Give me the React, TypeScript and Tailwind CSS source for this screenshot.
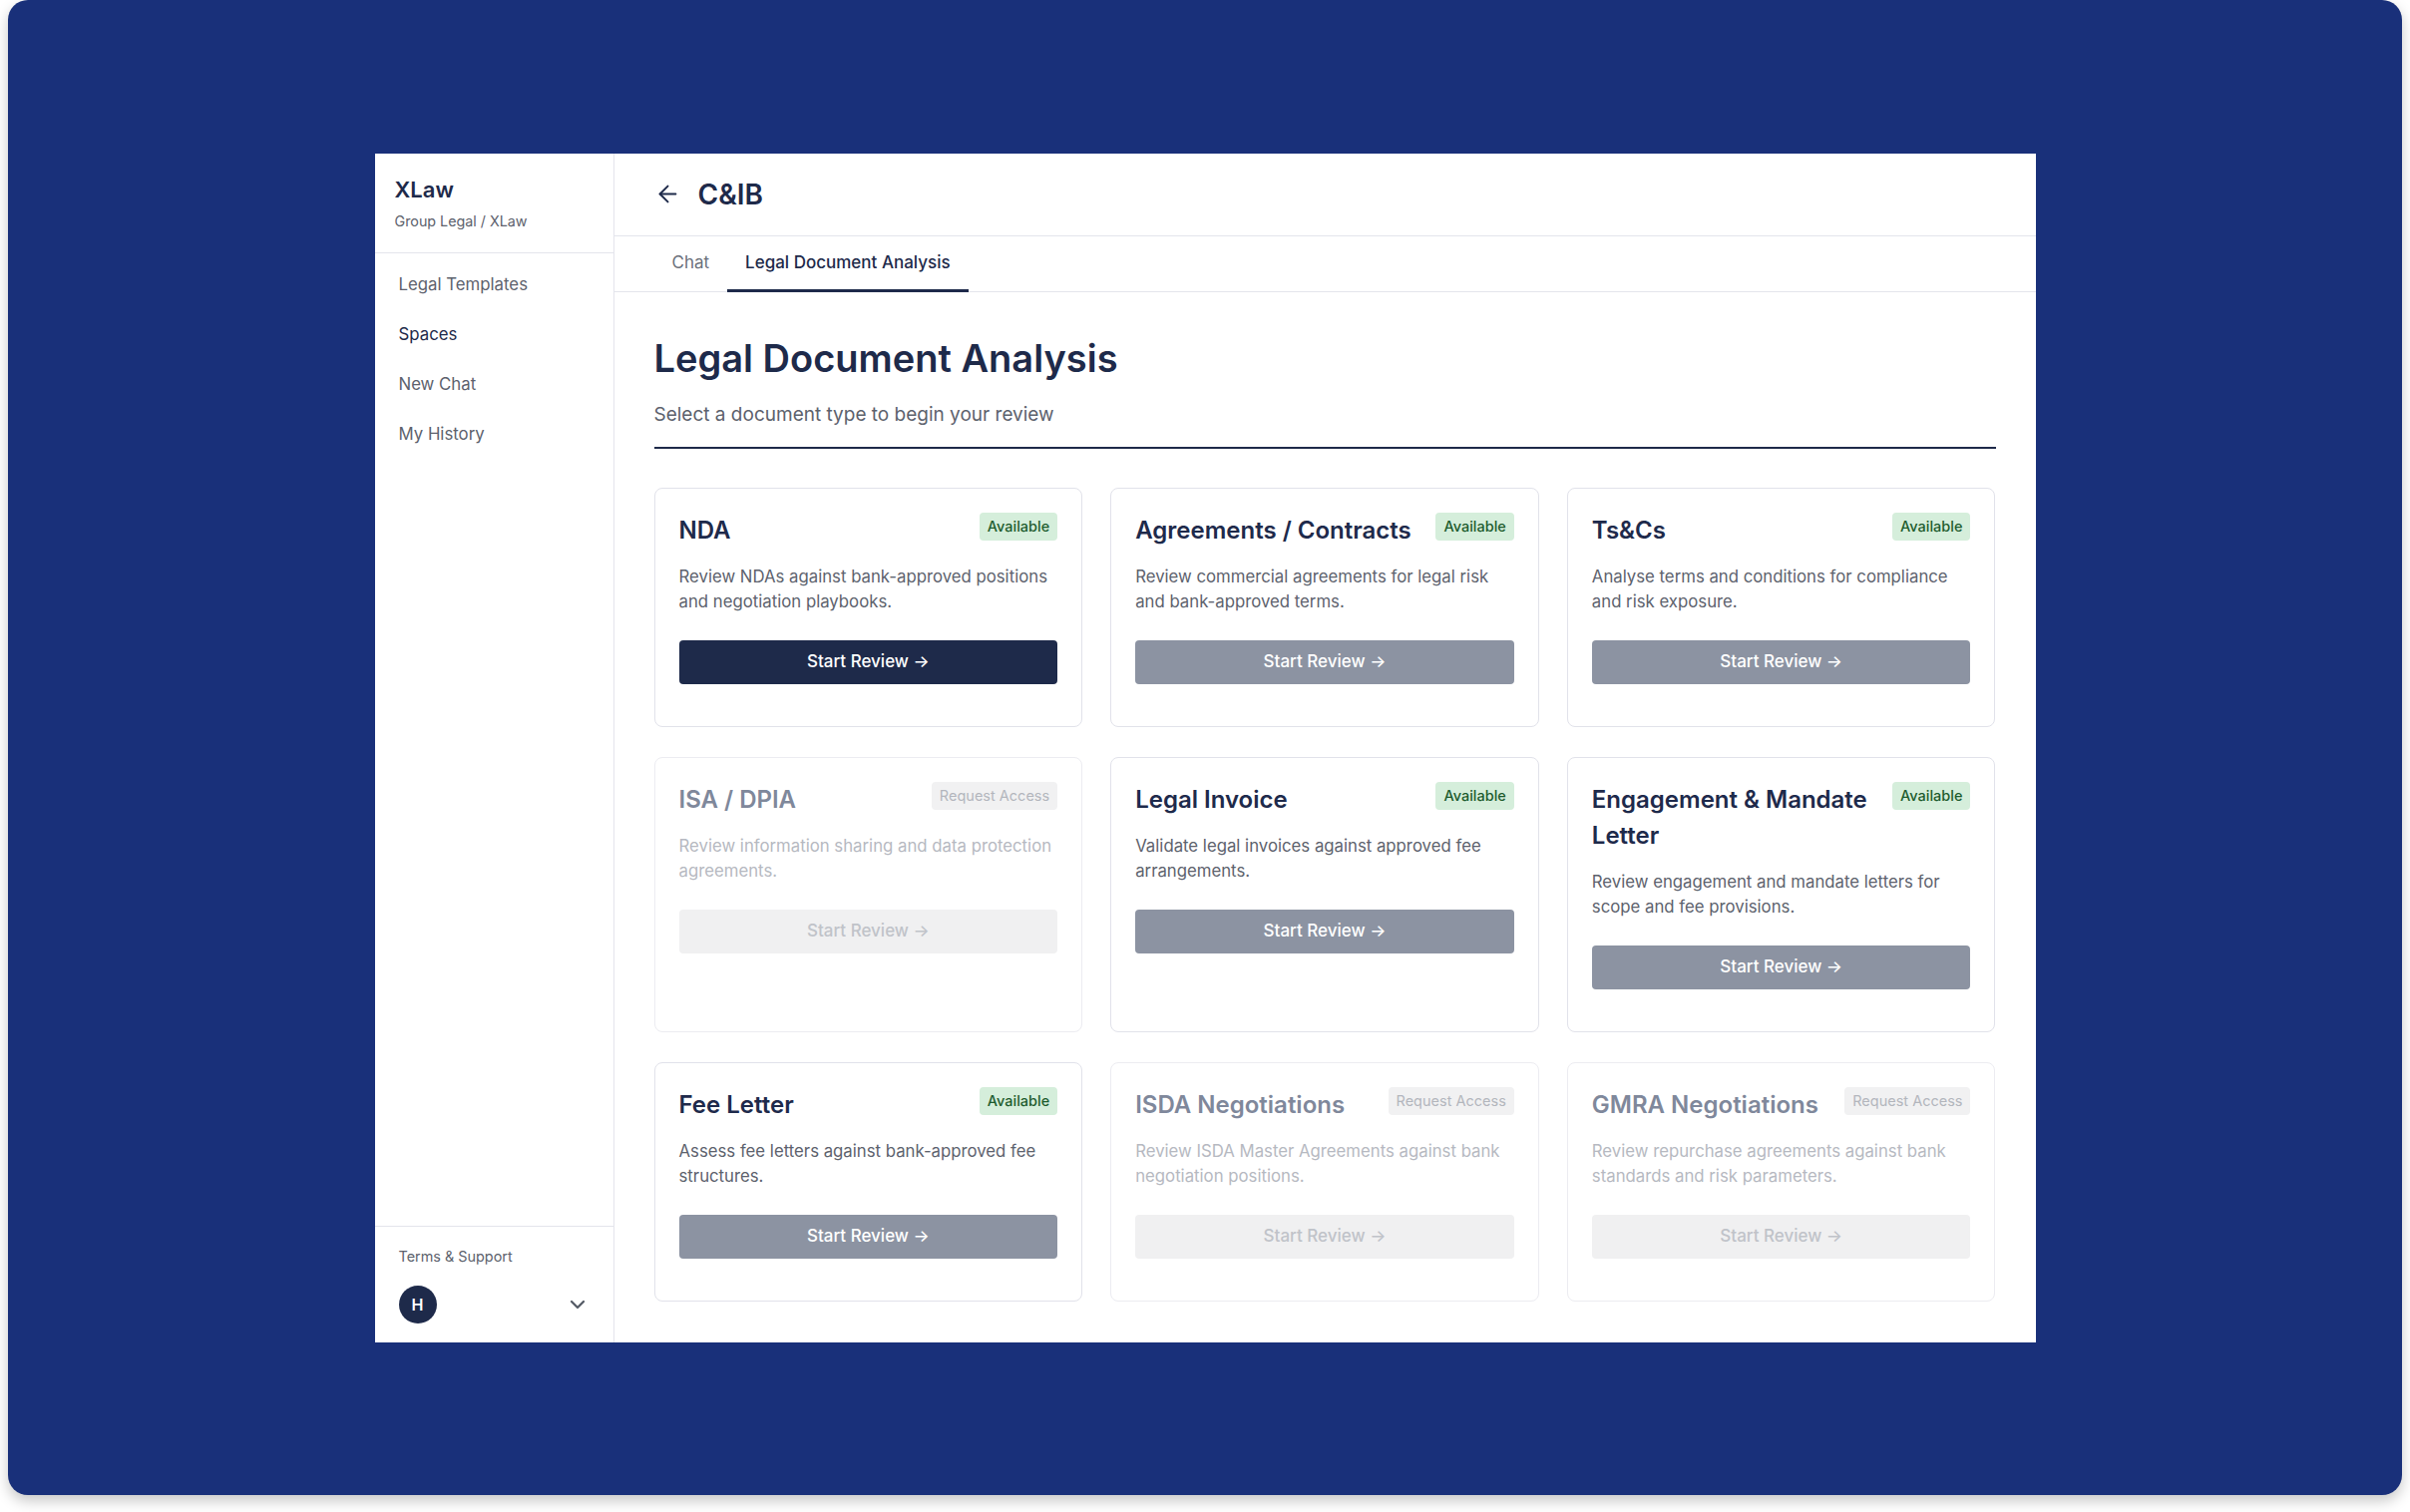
import { ArrowLeft, ChevronDown } from "lucide-react";

type Doc = {
  title: string;
  desc: string;
  status: "available" | "locked";
  primary?: boolean;
};

const docs: Doc[] = [
  { title: "NDA", desc: "Review NDAs against bank-approved positions and negotiation playbooks.", status: "available", primary: true },
  { title: "Agreements / Contracts", desc: "Review commercial agreements for legal risk and bank-approved terms.", status: "available" },
  { title: "Ts&Cs", desc: "Analyse terms and conditions for compliance and risk exposure.", status: "available" },
  { title: "ISA / DPIA", desc: "Review information sharing and data protection agreements.", status: "locked" },
  { title: "Legal Invoice", desc: "Validate legal invoices against approved fee arrangements.", status: "available" },
  { title: "Engagement & Mandate Letter", desc: "Review engagement and mandate letters for scope and fee provisions.", status: "available" },
  { title: "Fee Letter", desc: "Assess fee letters against bank-approved fee structures.", status: "available" },
  { title: "ISDA Negotiations", desc: "Review ISDA Master Agreements against bank negotiation positions.", status: "locked" },
  { title: "GMRA Negotiations", desc: "Review repurchase agreements against bank standards and risk parameters.", status: "locked" },
];

const nav = ["Legal Templates", "Spaces", "New Chat", "My History"];

function DocCard({ doc }: { doc: Doc }) {
  const locked = doc.status === "locked";
  return (
    <div
      className={
        "flex flex-col rounded-lg border bg-white p-6 pb-[42px] " +
        (locked ? "border-[#ececf1]" : "border-[#e1e2ea]")
      }
    >
      <div className="flex items-start justify-between gap-4">
        <h3
          className={
            "text-2xl leading-9 font-semibold " + (locked ? "text-[#7f889b]" : "text-[#1e2a4b]")
          }
        >
          {doc.title}
        </h3>
        {locked ? (
          <span className="shrink-0 whitespace-nowrap rounded bg-[#f1f1f2] px-2 py-1 text-[14.5px] leading-5 text-[#b3b6bd]">
            Request Access
          </span>
        ) : (
          <span className="shrink-0 whitespace-nowrap rounded bg-[#d5eedb] px-2 py-1 text-[14.5px] leading-5 font-medium text-[#1d5c2e]">
            Available
          </span>
        )}
      </div>
      <p className={"mt-4 text-[16.75px] leading-[25px] " + (locked ? "text-[#b6b9c1]" : "text-[#5d626d]")}>
        {doc.desc}
      </p>
      <button
        className={
          "mt-[26px] h-11 w-full rounded text-[17px] font-medium " +
          (locked
            ? "bg-[#f0f0f1] text-[#c0c3c9]"
            : doc.primary
              ? "bg-[#1e2a4a] text-white"
              : "bg-[#8c93a2] text-white")
        }
      >
        Start Review →
      </button>
    </div>
  );
}

export default function App() {
  return (
    <div className="h-[1516px] w-[2416px] bg-white px-2 pb-[17px] font-['Inter',sans-serif]">
      <div className="flex h-full items-center justify-center rounded-[20px] bg-[#19307a] shadow-[0_6px_14px_rgba(0,0,0,0.22)]">
        <div className="flex h-[1192px] w-[1665px] overflow-hidden bg-white">
          {/* sidebar */}
          <aside className="flex w-[240px] shrink-0 flex-col border-r border-[#e4e5ec]">
            <div className="border-b border-[#e4e5ec] px-5 pt-[22px] pb-[21px]">
              <div className="text-[22px] leading-7 font-semibold text-[#1e2a4a]">XLaw</div>
              <div className="mt-2 text-[14.3px] leading-5 text-[#5d626d]">Group Legal / XLaw</div>
            </div>
            <nav className="flex flex-col pt-[6px]">
              {nav.map((item) => (
                <div
                  key={item}
                  className={
                    "px-6 py-[13px] text-[16.8px] leading-6 " +
                    (item === "Spaces" ? "text-[#1e2a4a]" : "text-[#5d626d]")
                  }
                >
                  {item}
                </div>
              ))}
            </nav>
            <div className="mt-auto border-t border-[#e4e5ec] px-6 pt-5 pb-[19px]">
              <div className="text-[14.4px] leading-5 text-[#5d626d]">Terms &amp; Support</div>
              <div className="mt-[19px] flex items-center justify-between">
                <div className="flex h-[38px] w-[38px] items-center justify-center rounded-full bg-[#1e2a4a] text-base font-semibold text-white">
                  H
                </div>
                <ChevronDown className="h-6 w-6 text-[#555b66]" strokeWidth={2.25} />
              </div>
            </div>
          </aside>

          {/* main */}
          <main className="flex min-w-0 flex-1 flex-col">
            <header className="flex h-[83px] shrink-0 items-center gap-[17px] border-b border-[#e4e5ec] px-10">
              <ArrowLeft className="h-[27px] w-[27px] text-[#1e2a4a]" strokeWidth={1.75} />
              <h1 className="text-[28px] leading-9 font-semibold text-[#1e2a4a]">C&amp;IB</h1>
            </header>
            <div className="flex h-[56px] shrink-0 border-b border-[#e4e5ec] px-10">
              <div className="flex items-center px-[18px] text-[17px] text-[#6b707b]">Chat</div>
              <div className="relative flex items-center px-[18px] text-[17px] font-medium text-[#1e2a4a]">
                Legal Document Analysis
                <span className="absolute right-0 -bottom-px left-0 h-[3px] bg-[#1e2a4a]" />
              </div>
            </div>
            <div className="flex-1 overflow-hidden px-10 pt-[46px]">
              <div className="border-b-2 border-[#1e2a4a] pb-[18px]">
                <h2 className="text-[38px] leading-10 font-semibold text-[#1e2a4a]">Legal Document Analysis</h2>
                <p className="mt-[23px] text-[19px] leading-7 text-[#5d626d]">
                  Select a document type to begin your review
                </p>
              </div>
              <div className="mt-[39px] grid grid-cols-3 gap-x-7 gap-y-[30px]">
                {docs.map((d) => (
                  <DocCard key={d.title} doc={d} />
                ))}
              </div>
            </div>
          </main>
        </div>
      </div>
    </div>
  );
}
